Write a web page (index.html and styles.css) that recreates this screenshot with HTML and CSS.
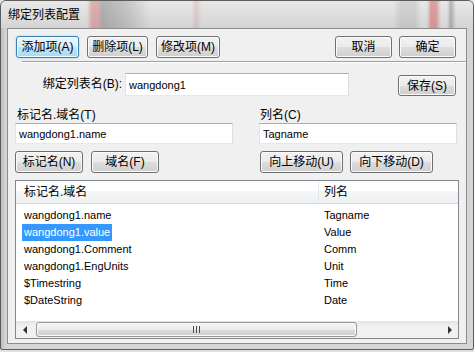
FILE: index.html
```html
<!DOCTYPE html>
<html lang="zh-CN">
<head>
    <meta charset="UTF-8">
    <title>绑定列表配置</title>
    <link rel="stylesheet" href="styles.css">
</head>
<body>
    <div class="window">
        <div class="titlebar">
            <span class="title">绑定列表配置</span>
        </div>
        <div class="client">
            <div class="toolbar">
                <div class="btn-group">
                    <button class="btn btn-focus btn-add">添加项(A)</button>
                    <button class="btn btn-del">删除项(L)</button>
                    <button class="btn btn-edit">修改项(M)</button>
                </div>
                <div class="btn-group btn-group-right">
                    <button class="btn btn-dlg">取消</button>
                    <button class="btn btn-dlg">确定</button>
                </div>
            </div>

            <div class="separator"></div>

            <div class="name-row">
                <label class="name-label">绑定列表名(B):</label>
                <input class="text name-input" type="text" value="wangdong1">
                <button class="btn btn-save">保存(S)</button>
            </div>

            <div class="fields">
                <div class="field field-tag">
                    <label>标记名.域名(T)</label>
                    <input class="text" type="text" value="wangdong1.name">
                </div>
                <div class="field field-col">
                    <label>列名(C)</label>
                    <input class="text" type="text" value="Tagname">
                </div>
            </div>

            <div class="actions">
                <div class="btn-group">
                    <button class="btn btn-wide">标记名(N)</button>
                    <button class="btn btn-wide">域名(F)</button>
                </div>
                <div class="btn-group btn-group-move">
                    <button class="btn btn-move">向上移动(U)</button>
                    <button class="btn btn-move">向下移动(D)</button>
                </div>
            </div>

            <div class="listview">
                <div class="lv-header">
                    <div class="lv-head lv-head-tag">标记名.域名</div>
                    <div class="lv-head lv-head-col">列名</div>
                </div>
                <div class="lv-body">
                    <div class="lv-row"><div class="cell-tag"><span>wangdong1.name</span></div><div class="cell-col">Tagname</div></div>
                    <div class="lv-row"><div class="cell-tag"><span class="selected">wangdong1.value</span></div><div class="cell-col">Value</div></div>
                    <div class="lv-row"><div class="cell-tag"><span>wangdong1.Comment</span></div><div class="cell-col">Comm</div></div>
                    <div class="lv-row"><div class="cell-tag"><span>wangdong1.EngUnits</span></div><div class="cell-col">Unit</div></div>
                    <div class="lv-row"><div class="cell-tag"><span>$Timestring</span></div><div class="cell-col">Time</div></div>
                    <div class="lv-row"><div class="cell-tag"><span>$DateString</span></div><div class="cell-col">Date</div></div>
                </div>
                <div class="hscroll">
                    <div class="sb-arrow"><span class="tri-left"></span></div>
                    <div class="sb-thumb"><span class="grip"></span></div>
                    <div class="sb-track"></div>
                    <div class="sb-arrow"><span class="tri-right"></span></div>
                </div>
            </div>
        </div>
    </div>
</body>
</html>
```

FILE: styles.css
```css
body {
    margin: 0;
    background: #e2e2e2;
    font-family: "Liberation Sans", "Noto Sans CJK SC", sans-serif;
    font-size: 12px;
    color: #000;
}
.window {
    width: 474px;
    height: 350px;
    box-sizing: border-box;
    border: 1px solid #5c5c5c;
    border-radius: 6px 6px 2px 2px;
    background: linear-gradient(to right, #bdbdbd 0, #d6d6d6 5px, #d6d6d6 100%);
    padding: 0 6px 5px;
    display: flex;
    flex-direction: column;
}
.titlebar {
    height: 27px;
    margin: 0 -6px;
    padding-left: 7px;
    display: flex;
    align-items: center;
    border-radius: 5px 5px 0 0;
    background:
        linear-gradient(to right, transparent 0, transparent 86px, rgba(205, 70, 70, 0.35) 91px, rgba(205, 70, 70, 0.35) 97px, rgba(80, 80, 80, 0.35) 101px, rgba(110, 110, 110, 0.28) 125px, transparent 150px, transparent 190px, rgba(200, 90, 90, 0.18) 195px, transparent 201px, transparent 392px, rgba(120, 120, 120, 0.18) 400px, rgba(120, 120, 120, 0.18) 414px, transparent 420px, transparent 426px, rgba(210, 70, 70, 0.45) 430px, rgba(210, 70, 70, 0.45) 435px, transparent 440px, transparent 446px, rgba(80, 80, 80, 0.35) 450px, transparent 455px),
        linear-gradient(#e8e8e8, #d4d4d4);
}
.title {
    font-size: 12px;
    line-height: 14px;
}
.client {
    flex: 1;
    border: 1px solid #8e8e8e;
    background: #f0f0f0;
    padding: 0 7px;
    display: flex;
    flex-direction: column;
}

/* buttons */
.btn {
    box-sizing: border-box;
    height: 22px;
    padding: 0;
    border: 1px solid #707070;
    border-radius: 3px;
    background: linear-gradient(#f2f2f2 0%, #ebebeb 50%, #dddddd 51%, #cfcfcf 100%);
    box-shadow: inset 0 0 0 1px #fbfbfb;
    font-family: "Liberation Sans", "Noto Sans CJK SC", sans-serif;
    font-size: 12px;
    line-height: 18px;
    color: #000;
}
.btn-focus {
    border-color: #3c7fb1;
    background: linear-gradient(#eaf6fd 0%, #d9f0fc 50%, #bee6fd 51%, #a7d9f5 100%);
    box-shadow: inset 0 0 0 1px #f4fbff, 0 0 2px #7ecbf0;
}
.btn-group {
    display: flex;
    gap: 8px;
}
.btn-group-right {
    gap: 7px;
}
.btn-add { width: 63px; }
.btn-del { width: 61px; }
.btn-edit { width: 64px; }
.btn-dlg { width: 57px; }
.btn-save {
    width: 58px;
    height: 21px;
    margin: 2px 3px 0 auto;
}
.btn-wide { width: 68px; }
.btn-move { width: 83px; }

.toolbar {
    display: flex;
    justify-content: space-between;
    margin-top: 7px;
    padding: 0 3px 0 1px;
}
.separator {
    margin: 3px -7px 0 7px;
    border-top: 1px solid #a0a0a0;
    border-bottom: 1px solid #ffffff;
}

/* text boxes */
.text {
    box-sizing: border-box;
    height: 21px;
    margin: 0;
    padding: 0 3px;
    border: 1px solid;
    border-color: #abadb3 #dbdfe6 #e3e9ef #e2e3ea;
    background: #fff;
    font-family: "Liberation Sans", sans-serif;
    font-size: 11px;
    color: #000;
    outline: none;
}
.name-row {
    display: flex;
    align-items: flex-start;
    margin-top: 10px;
}
.name-label {
    width: 107px;
    margin-right: 3px;
    text-align: right;
    line-height: 23px;
}
.name-input {
    width: 224px;
    height: 23px;
}
.fields {
    display: flex;
    margin-top: 12px;
}
.field {
    display: flex;
    flex-direction: column;
}
.field label {
    line-height: 14px;
    margin-bottom: 1px;
}
.field-tag { width: 218px; }
.field-tag label { padding-left: 2px; }
.field-col {
    width: 198px;
    margin-left: 26px;
}
.field-col label { padding-left: 1px; }
.actions {
    display: flex;
    margin-top: 7px;
}
.btn-group-move {
    margin-left: 101px;
    gap: 7px;
}

/* list view */
.listview {
    box-sizing: border-box;
    height: 159px;
    margin-top: 7px;
    border: 1px solid #828790;
    background: #fff;
    display: flex;
    flex-direction: column;
}
.lv-header {
    display: flex;
    height: 22px;
    border-bottom: 1px solid #d5d5d5;
    background: linear-gradient(#ffffff 0%, #ffffff 45%, #f6f7f8 46%, #eef0f2 100%);
}
.lv-head {
    line-height: 22px;
}
.lv-head-tag {
    width: 294px;
    padding-left: 8px;
    border-right: 1px solid #e3e8ee;
}
.lv-head-col {
    padding-left: 5px;
}
.lv-body {
    flex: 1;
    padding-top: 3px;
    font-size: 11px;
}
.lv-row {
    display: flex;
    height: 17px;
    line-height: 17px;
}
.cell-tag {
    width: 297px;
    padding-left: 6px;
}
.cell-tag span {
    display: inline-block;
    padding: 0 2px;
}
.cell-tag .selected {
    background: #3399ff;
    color: #fff;
}
.cell-col {
    padding-left: 5px;
}

/* scroll bar */
.hscroll {
    display: flex;
    align-items: center;
    height: 17px;
    background: linear-gradient(#e4e4e4, #f1f1f1 30%, #f1f1f1);
}
.sb-arrow {
    width: 17px;
    height: 17px;
    display: flex;
    align-items: center;
    justify-content: center;
}
.tri-left {
    width: 0;
    height: 0;
    border-top: 4px solid transparent;
    border-bottom: 4px solid transparent;
    border-right: 4px solid #333;
}
.tri-right {
    width: 0;
    height: 0;
    border-top: 4px solid transparent;
    border-bottom: 4px solid transparent;
    border-left: 4px solid #333;
}
.sb-thumb {
    box-sizing: border-box;
    width: 321px;
    height: 15px;
    margin-left: 3px;
    border: 1px solid #979797;
    border-radius: 3px;
    background: linear-gradient(#f4f4f4 0%, #ececec 50%, #dcdcdc 51%, #cfcfcf 100%);
    box-shadow: inset 0 0 0 1px #fafafa;
    display: flex;
    align-items: center;
    justify-content: center;
}
.grip {
    width: 7px;
    height: 7px;
    background: repeating-linear-gradient(to right, #4a4a4a 0, #4a4a4a 1px, transparent 1px, transparent 3px);
}
.sb-track {
    flex: 1;
}
```
